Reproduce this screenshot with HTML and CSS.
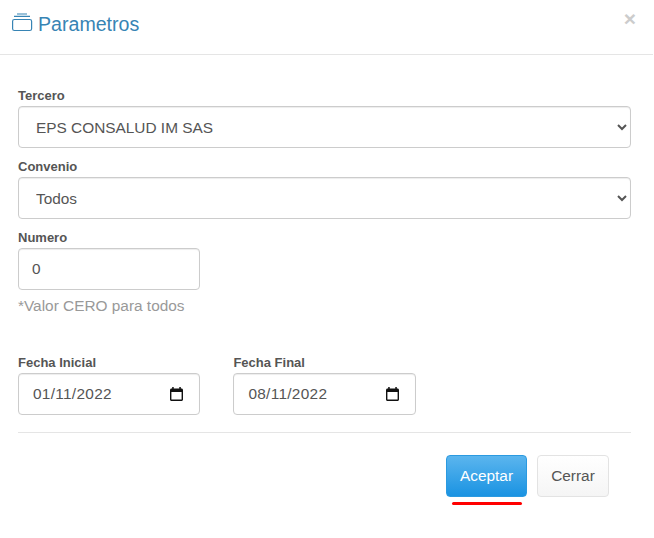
FILE: index.html
```html
<!DOCTYPE html>
<html lang="es">
<head>
<meta charset="utf-8">
<title>Parametros</title>
<link rel="stylesheet" href="styles.css">
</head>
<body>
<div class="modal">
  <header class="modal-header">
    <h4 class="modal-title">
      <svg class="title-icon" width="22" height="22" viewBox="0 0 22 22" fill="none" stroke="currentColor" stroke-width="1.2">
        <rect x="1.6" y="6.5" width="19" height="11" rx="1.8"/>
        <path d="M3 3.4H19M6 1H16"/>
      </svg>
      <span>Parametros</span>
    </h4>
    <span class="close">×</span>
  </header>
  <div class="modal-body">
    <div class="field">
      <label class="label" for="tercero">Tercero</label>
      <select id="tercero" class="control"><option>EPS CONSALUD IM SAS</option></select>
    </div>
    <div class="field">
      <label class="label" for="convenio">Convenio</label>
      <select id="convenio" class="control"><option>Todos</option></select>
    </div>
    <div class="field">
      <label class="label" for="numero">Numero</label>
      <input id="numero" class="control control-number" type="text" value="0">
      <p class="hint">*Valor CERO para todos</p>
    </div>
    <div class="date-row">
      <div class="field">
        <label class="label" for="inicial">Fecha Inicial</label>
        <div class="date-control">
          <input id="inicial" class="control control-date" type="text" value="01/11/2022">
          <svg class="calendar" width="13" height="14" viewBox="0 0 13 14"><path d="M2.2 0h1.5v1.4h5.6V0h1.5v1.4h.7c.8 0 1.5.7 1.5 1.5v9.6c0 .8-.7 1.5-1.5 1.5H1.500c-.8 0-1.500-.7-1.500-1.500V2.900c0-.8.7-1.500 1.500-1.500h.7zM1.400 5v7.600h10.200V5z"/></svg>
        </div>
      </div>
      <div class="field">
        <label class="label" for="final">Fecha Final</label>
        <div class="date-control">
          <input id="final" class="control control-date" type="text" value="08/11/2022">
          <svg class="calendar" width="13" height="14" viewBox="0 0 13 14"><path d="M2.2 0h1.5v1.4h5.6V0h1.5v1.4h.7c.8 0 1.5.7 1.5 1.5v9.6c0 .8-.7 1.5-1.5 1.5H1.500c-.8 0-1.500-.7-1.500-1.500V2.900c0-.8.7-1.500 1.500-1.500h.7zM1.400 5v7.600h10.200V5z"/></svg>
        </div>
      </div>
    </div>
    <footer class="modal-footer">
      <button class="btn btn-primary" type="button">Aceptar</button>
      <button class="btn btn-default" type="button">Cerrar</button>
    </footer>
  </div>
</div>
</body>
</html>
```
FILE: styles.css
```css
* {
  box-sizing: border-box;
}
html, body {
  margin: 0;
  background: #fff;
}
body {
  font-family: "Liberation Sans", Arial, sans-serif;
  font-size: 15.4px;
  color: #555;
}
.modal {
  width: 653px;
  height: 538px;
  overflow: hidden;
}
.modal-header {
  height: 55px;
  border-bottom: 1px solid #e5e5e5;
  padding: 11px 17px 0 11px;
  display: flex;
  justify-content: space-between;
  align-items: flex-start;
}
.modal-title {
  margin: 0;
  display: flex;
  align-items: center;
  gap: 5px;
  font-size: 19.6px;
  font-weight: normal;
  line-height: 26px;
  color: #3784b4;
}
.title-icon {
  display: block;
}
.close {
  font-size: 21px;
  font-weight: bold;
  line-height: 15px;
  color: #ccc;
}
.modal-body {
  padding: 33px 22px 0 18px;
}
.field {
  display: flex;
  flex-direction: column;
  margin-bottom: 11px;
}
.label {
  font-size: 13px;
  font-weight: bold;
  line-height: 15px;
  margin-bottom: 3px;
  height: 15px;
}
.control {
  height: 42px;
  border: 1px solid #ccc;
  border-radius: 4px;
  background: #fff;
  color: #555;
  font-family: "Liberation Sans", Arial, sans-serif;
  font-size: 15.4px;
  padding: 0 13px;
  box-shadow: inset 0 1px 1px rgba(0, 0, 0, .075);
}
.control-number {
  width: 182px;
}
.hint {
  margin: 6px 0 0;
  line-height: 20px;
  color: #999;
}
.date-row {
  display: flex;
  gap: 33px;
  margin-top: 39px;
}
.date-control {
  position: relative;
}
.control-date {
  display: block;
  width: 182.4px;
  letter-spacing: .3px;
  padding-left: 14px;
}
.calendar {
  position: absolute;
  right: 17px;
  top: 14px;
  fill: #111;
}
.modal-footer {
  margin-top: 6px;
  border-top: 1px solid #e5e5e5;
  padding: 22px 22px 0 0;
  display: flex;
  justify-content: flex-end;
  gap: 10px;
}
.btn {
  height: 42px;
  padding: 0;
  border-radius: 4px;
  font-family: "Liberation Sans", Arial, sans-serif;
  font-size: 15.4px;
}
.btn-primary {
  position: relative;
  width: 81px;
  color: #fff;
  border: 1px solid #2b9ae0;
  background: linear-gradient(#5bb5ee, #1a93e2);
}
.btn-primary::after {
  content: "";
  position: absolute;
  left: 5px;
  right: 4px;
  bottom: -9px;
  height: 3px;
  border-radius: 2px;
  background: #f00;
}
.btn-default {
  width: 72px;
  color: #555;
  border: 1px solid #e3e3e3;
  background: linear-gradient(#fff, #f5f5f5);
}
```
